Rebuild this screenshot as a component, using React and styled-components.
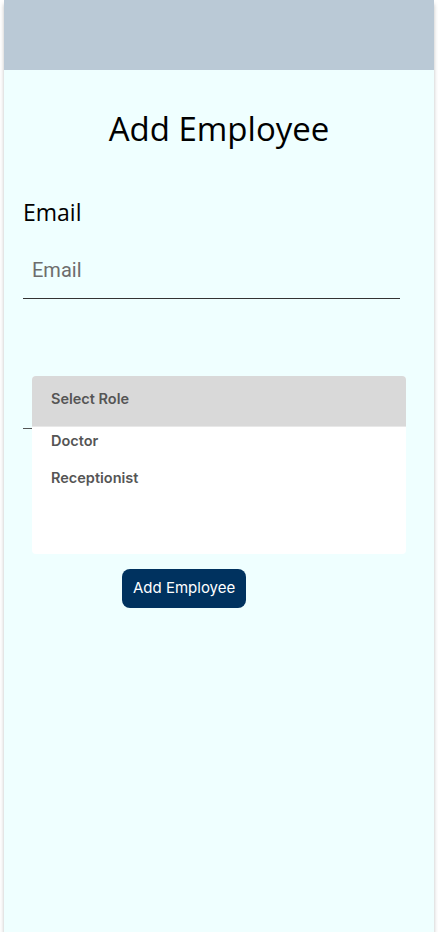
import React from "react";
import styled, { createGlobalStyle } from "styled-components";

const Global = createGlobalStyle`
  html, body { margin: 0; padding: 0; background: #ffffff; }
  * { box-sizing: border-box; }
`;

const Frame = styled.div`
  width: 430px;
  height: 932px;
  margin: 0 4px;
  background: #efffff;
  box-shadow: 0 4px 4px rgba(0, 0, 0, 0.25);
  display: flex;
  flex-direction: column;
`;

const TopBar = styled.header`
  height: 70px;
  background: #bac9d6;
  flex-shrink: 0;
`;

const Content = styled.main`
  padding: 39px 30px 0 19px;
  display: flex;
  flex-direction: column;
`;

const Title = styled.h1`
  margin: 0;
  font-family: "Open Sans", "Noto Sans", sans-serif;
  font-weight: 400;
  font-size: 33px;
  line-height: 40px;
  text-align: center;
  color: #000;
  padding-left: 11px;
`;

const Label = styled.label`
  margin-top: 48px;
  font-family: "Open Sans", "Noto Sans", sans-serif;
  font-size: 23px;
  line-height: 30px;
  color: #000;
`;

const TextInput = styled.input`
  display: block;
  margin-top: 15px;
  width: 377px;
  height: 57px;
  padding: 0 9px;
  border: none;
  border-bottom: 1px solid #333;
  background: transparent;
  font-family: Roboto, "Noto Sans", sans-serif;
  font-size: 20px;
  color: #222;
  outline: none;
  &::placeholder { color: #6d6d6d; }
`;

const RoleField = styled.div`
  position: relative;
  margin-top: 73px;
  width: 377px;
  height: 57px;
  border-bottom: 1px solid #555;
`;

const Menu = styled.div`
  position: absolute;
  top: 4px;
  left: 9px;
  width: 374px;
  height: 178px;
  background: #ffffff;
  border-radius: 4px;
  overflow: hidden;
  font-family: Inter, "Noto Sans", sans-serif;
  font-weight: 600;
  font-size: 14.5px;
  line-height: 17px;
  color: #555;
`;

const MenuHead = styled.div`
  height: 51px;
  padding: 14px 19px 0;
  background: #d9d9d9;
  border-bottom: 1px solid #e8e8e8;
`;

const Option = styled.div`
  padding: 5px 19px 15px;
`;

const Button = styled.button`
  align-self: flex-start;
  margin: 140px 0 0 99px;
  height: 39px;
  padding: 0 11px 3px;
  border: none;
  border-radius: 8px;
  background: #00325f;
  color: #ffffff;
  font-family: Inter, "Noto Sans", sans-serif;
  font-size: 15px;
  cursor: pointer;
`;

export default function App() {
  return (
    <>
      <Global />
      <Frame>
        <TopBar />
        <Content>
          <Title>Add Employee</Title>
          <Label>Email</Label>
          <TextInput placeholder="Email" />
          <RoleField>
            <Menu>
              <MenuHead>Select Role</MenuHead>
              <Option>Doctor</Option>
              <Option>Receptionist</Option>
            </Menu>
          </RoleField>
          <Button>Add Employee</Button>
        </Content>
      </Frame>
    </>
  );
}
